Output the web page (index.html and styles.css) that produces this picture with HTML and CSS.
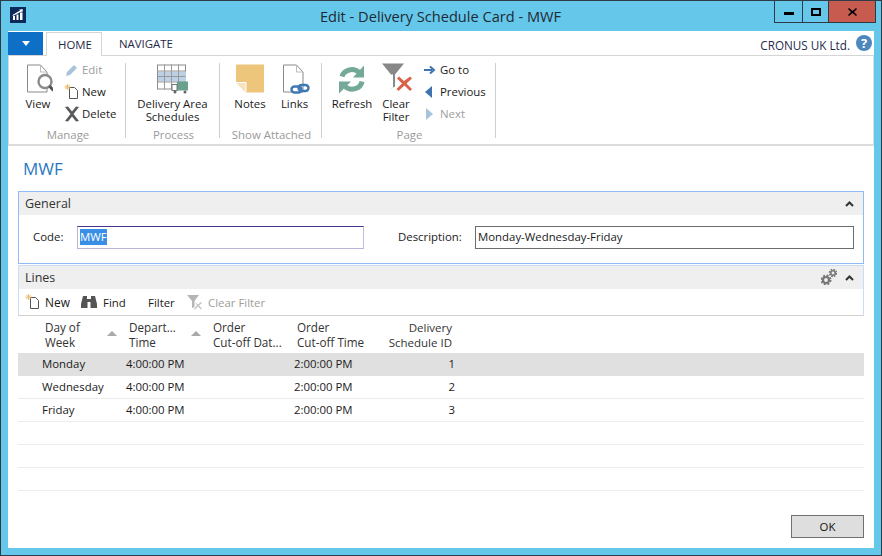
FILE: index.html
```html
<!DOCTYPE html>
<html lang="en">
<head>
<meta charset="utf-8">
<title>Edit - Delivery Schedule Card - MWF</title>
<link rel="stylesheet" href="styles.css">
</head>
<body>
<div class="window">
  <header class="titlebar">
    <svg class="app-logo" width="16" height="16" viewBox="0 0 16 16"><rect width="16" height="16" fill="#0b2a5b"/><path d="M3 9h2v4H3zM6.500 7.500h2V13h-2zM10 5.500h2.500V13H10z" fill="#fff"/><path d="M2.500 8 10 3.500l-.7-.9L13 2.300l-.8 3.200-.8-1L3 9z" fill="#fff"/></svg>
    <div class="title">Edit - Delivery Schedule Card - MWF</div>
    <div class="winbtns">
      <div class="winbtn"><span class="glyph-min"></span></div>
      <div class="winbtn"><span class="glyph-max"></span></div>
      <div class="winbtn close"><svg width="9" height="8" viewBox="0 0 9 8"><path d="M1 0l3.500 3L8 0l1 1-3 3 3 3-1 1-3.500-3L1 8 0 7l3-3-3-3z" fill="#000"/></svg></div>
    </div>
  </header>
  <div class="client">
    <div class="tabs">
      <div class="appbtn"><span class="tri"></span></div>
      <div class="tab active">HOME</div>
      <div class="tab">NAVIGATE</div>
      <div class="company">CRONUS UK Ltd.</div>
      <div class="help">?</div>
    </div>
    <div class="ribbon">
      <section class="group g-manage">
        <div class="group-body">
          <div class="big w-view">
            <svg width="30" height="30" viewBox="0 0 30 30" fill="none"><path d="M4.500 1.500h13l6.500 7v20H4.500z" fill="#fff" stroke="#8a8a8a"/><path d="M17.500 1.500v7H24" stroke="#bbb"/><circle cx="22" cy="18" r="6.500" fill="#fff" stroke="#8a8a8a" stroke-width="2.400"/><path d="M26.500 22.500 30.500 27" stroke="#555" stroke-width="3"/></svg>
            <span>View</span>
          </div>
          <div class="stack">
            <div class="small off"><svg width="16" height="16" viewBox="0 0 16 16"><path d="M2 14l1-4 7-7 3 3-7 7z" fill="#a9c3dc"/></svg><span>Edit</span></div>
            <div class="small"><svg width="16" height="16" viewBox="0 0 16 16" fill="none"><path d="M5.500 3.500h5l3 3v8h-8z" fill="#fff" stroke="#555"/><path d="M3.500 0v6M.5 3h6M1.500 1l4 4M5.500 1l-4 4" stroke="#eebd6e"/></svg><span>New</span></div>
            <div class="small"><svg width="16" height="16" viewBox="0 0 16 16"><path d="M1 1l3-.5 4 5 4-5 3 .5-5.500 7 5.500 7-3 .5-4-5-4 5-3-.5L6.500 8z" fill="#5a5a5a"/></svg><span>Delete</span></div>
          </div>
        </div>
        <div class="group-label">Manage</div>
      </section>
      <section class="group g-process">
        <div class="group-body">
          <div class="big w-delivery">
            <svg width="32" height="30" viewBox="0 0 32 30"><rect x=".5" y="1.500" width="28" height="24" fill="#fff" stroke="#8c8c8c"/><rect x="1" y="8" width="28" height="10" fill="#bdd1e6"/><path d="M.5 7.500h28M.5 13h28M.5 18.500h28M7.500 1v25M14.500 1v25M21.500 1v25" stroke="#9a9a9a"/><rect x="20" y="18" width="11" height="9" fill="#69a08e"/><rect x="15" y="21" width="5" height="6" fill="#fff" stroke="#777"/><circle cx="18" cy="28.500" r="1.500" fill="#666"/><circle cx="28" cy="28.500" r="1.500" fill="#666"/></svg>
            <span>Delivery Area<br>Schedules</span>
          </div>
        </div>
        <div class="group-label">Process</div>
      </section>
      <section class="group g-attached">
        <div class="group-body">
          <div class="big w-notes">
            <svg width="28" height="28" viewBox="0 0 28 28"><path d="M0 0h28v28H10L0 18z" fill="#edc67c"/><path d="M10 28V18H0" fill="#f7e3bd" stroke="#fff" stroke-width="1"/></svg>
            <span>Notes</span>
          </div>
          <div class="big w-links">
            <svg width="30" height="30" viewBox="0 0 30 30" fill="none"><path d="M3.500 1.500h13l6.500 7v20H3.500z" fill="#fff" stroke="#8a8a8a"/><path d="M16.500 1.500v7H23" stroke="#bbb"/><rect x="11.500" y="23" width="10" height="6" rx="3" stroke="#3f78b5" stroke-width="2.400" fill="#fff"/><rect x="18.500" y="21.500" width="10" height="6" rx="3" stroke="#3f78b5" stroke-width="2.400"/></svg>
            <span>Links</span>
          </div>
        </div>
        <div class="group-label">Show Attached</div>
      </section>
      <section class="group g-page">
        <div class="group-body">
          <div class="big w-refresh">
            <svg width="30" height="30" viewBox="0 0 30 30" fill="none"><path d="M5 12a10 9 0 0 1 17-4" stroke="#74a899" stroke-width="5"/><path d="M27 1v12H16z" fill="#74a899"/><path d="M25 17a10 9 0 0 1-17 5" stroke="#74a899" stroke-width="5"/><path d="M2 29V17h12z" fill="#74a899"/></svg>
            <span>Refresh</span>
          </div>
          <div class="big w-clear">
            <svg width="32" height="30" viewBox="0 0 32 30"><path d="M0 0h22L13 11v12l-4 2V11z" fill="#888"/><path d="M9 11v14l2-1V11z" fill="#fff"/><path d="M15 15l2-2 5 4.500L28 13l2 2-5.500 5 5.500 5.500-2 2-5.500-5.500-6 5.500-2-2 5.500-5.500z" fill="#d9634a"/></svg>
            <span>Clear<br>Filter</span>
          </div>
          <div class="stack">
            <div class="small"><svg width="14" height="16" viewBox="0 0 14 16"><path d="M1 8h8M7 4.500 11 8l-4 3.500" fill="none" stroke="#3f73ad" stroke-width="2"/></svg><span>Go to</span></div>
            <div class="small"><svg width="14" height="16" viewBox="0 0 14 16"><path d="M2 8l7-6v12z" fill="#3f73ad"/></svg><span>Previous</span></div>
            <div class="small off"><svg width="14" height="16" viewBox="0 0 14 16"><path d="M10 8L3 2v12z" fill="#a9c3dc"/></svg><span>Next</span></div>
          </div>
        </div>
        <div class="group-label">Page</div>
      </section>
    </div>
    <div class="page">
      <h1 class="page-title">MWF</h1>
      <section class="fasttab focused">
        <div class="fast-head"><span>General</span><svg class="chev" width="9" height="6" viewBox="0 0 9 6"><path d="M1 5l3.500-3.500L8 5" fill="none" stroke="#333" stroke-width="2"/></svg></div>
        <div class="fields">
          <label class="lbl-code">Code:</label>
          <div class="input code"><span class="sel">MWF</span></div>
          <label class="lbl-desc">Description:</label>
          <div class="input desc">Monday-Wednesday-Friday</div>
        </div>
      </section>
      <section class="fasttab lines">
        <div class="fast-head"><span>Lines</span>
          <svg class="gears" width="16" height="16" viewBox="0 0 16 16" fill="none" stroke="#777"><circle cx="5" cy="11" r="3" stroke-width="2.200"/><circle cx="5" cy="11" r="4.500" stroke-width="2" stroke-dasharray="2 1.530"/><circle cx="12" cy="4" r="2.200" stroke-width="1.600"/><circle cx="12" cy="4" r="3.500" stroke-width="1.600" stroke-dasharray="1.600 1.150"/></svg>
          <svg class="chev" width="9" height="6" viewBox="0 0 9 6"><path d="M1 5l3.500-3.500L8 5" fill="none" stroke="#333" stroke-width="2"/></svg>
        </div>
        <div class="toolbar">
          <div class="tool t-new"><svg width="16" height="16" viewBox="0 0 16 16" fill="none"><path d="M5.500 3.500h5l3 3v8h-8z" fill="#fff" stroke="#555"/><path d="M3.500 0v6M.5 3h6M1.500 1l4 4M5.500 1l-4 4" stroke="#eebd6e"/></svg><span>New</span></div>
          <div class="tool t-find"><svg width="16" height="14" viewBox="0 0 16 14"><path d="M2 1h4v3h4V1h4l2 8v4H9.500V7h-3v6H0V9z" fill="#555"/></svg><span>Find</span></div>
          <div class="tool t-filter"><span>Filter</span></div>
          <div class="tool t-clear off"><svg width="16" height="15" viewBox="0 0 16 15"><path d="M0 0h12L7.500 6v6L5 13V6z" fill="#b5b5b5"/><path d="M8 7l3 2.500L14 7l1 1-3 2.500 3 3-1 1-3-3-3 3-1-1 3-3z" fill="#c4c4c4"/></svg><span>Clear Filter</span></div>
        </div>
      </section>
      <div class="grid">
        <div class="grid-head">
          <div class="th sorted">Day of<br>Week<i class="sort"></i></div>
          <div class="th sorted">Depart...<br>Time<i class="sort"></i></div>
          <div class="th">Order<br>Cut-off Dat...</div>
          <div class="th">Order<br>Cut-off Time</div>
          <div class="th num">Delivery<br>Schedule ID</div>
        </div>
        <div class="grid-row current"><div>Monday</div><div>4:00:00 PM</div><div></div><div>2:00:00 PM</div><div class="num">1</div></div>
        <div class="grid-row"><div>Wednesday</div><div>4:00:00 PM</div><div></div><div>2:00:00 PM</div><div class="num">2</div></div>
        <div class="grid-row"><div>Friday</div><div>4:00:00 PM</div><div></div><div>2:00:00 PM</div><div class="num">3</div></div>
        <div class="grid-row"></div>
        <div class="grid-row"></div>
        <div class="grid-row"></div>
      </div>
      <div class="actions"><button class="ok" type="button">OK</button></div>
    </div>
  </div>
</div>
</body>
</html>
```
FILE: styles.css
```css
* { box-sizing: border-box; }
html, body { margin: 0; padding: 0; }
body { width: 882px; height: 556px; overflow: hidden; font-family: "Open Sans", "Noto Sans", sans-serif; font-size: 11.4px; color: #1a1a1a; }
.window { width: 882px; height: 556px; background: #65c8eb; border: 1px solid #2e3b46; display: flex; flex-direction: column; }
.titlebar { height: 30px; display: flex; align-items: flex-start; flex: none; }
.app-logo { margin: 6px 0 0 9px; flex: none; }
.title { flex: 1; text-align: center; font-size: 14.6px; line-height: 30px; color: #1f2a33; padding-left: 81px; }
.winbtns { display: flex; margin-right: 5px; height: 22px; border: 1px solid #2e3b46; border-top: 0; }
.winbtn { width: 28px; display: flex; align-items: center; justify-content: center; border-right: 1px solid #2e3b46; }
.winbtn:nth-child(2) { width: 26px; }
.winbtn:last-child { width: 46px; border-right: 0; }
.close { background: #c75b50; }
.glyph-min { width: 10px; height: 3px; background: #000; margin-top: 4px; }
.glyph-max { width: 10px; height: 8px; border: 2px solid #000; }
.client { flex: 1; margin: 0 7px 7px 7px; background: #fff; display: flex; flex-direction: column; min-height: 0; }
.tabs { height: 25px; display: flex; align-items: flex-start; flex: none; padding-top: 1px; border-bottom: 1px solid #d5d5d5; position: relative; }
.appbtn { width: 35px; height: 23px; background: #0e6fc7; display: flex; align-items: center; justify-content: center; }
.tri { width: 0; height: 0; border-left: 4px solid transparent; border-right: 4px solid transparent; border-top: 5px solid #fff; }
.tab { height: 24px; line-height: 23px; padding: 0 11px; color: #1f2a4a; }
.tab.active { margin-left: 3px; height: 24px; width: 56px; border: 1px solid #d5d5d5; border-bottom: 0; background: #fff; margin-bottom: -1px; }
.tab:not(.active) { margin-left: 6px; }
.company { margin-left: auto; line-height: 27px; font-size: 11.7px; color: #1f2a4a; }
.help { width: 16px; height: 16px; border-radius: 50%; background: #4d87bd; color: #fff; font-weight: 700; font-size: 13px; line-height: 16px; text-align: center; margin: 3px 2px 0 6px; }
.ribbon { height: 90px; display: flex; flex: none; border: 1px solid #dcdcdc; border-top: 0; border-bottom: 2px solid #dcdcdc; padding-top: 7px; }
.group { display: flex; flex-direction: column; border-right: 1px solid #cfcfcf; height: 75px; }
.g-manage { width: 117px; }
.g-process { width: 94px; }
.g-attached { width: 102px; }
.g-page { width: 174px; }
.group-body { display: flex; flex: 1; min-height: 0; }
.group-label { text-align: center; color: #9a9a9a; line-height: 15px; height: 11px; padding-left: 2px; }
.big { display: flex; flex-direction: column; align-items: center; line-height: 13px; text-align: center; }
.big svg { flex: none; height: 31px; margin-bottom: 3px; }
.w-view { width: 58px; }
.w-delivery { width: 94px; }
.w-notes { width: 60px; padding-top: 1px; }
.w-notes svg { height: 29px; margin-bottom: 4px; }
.w-links { width: 29px; }
.w-refresh { width: 60px; padding-top: 1px; }
.w-refresh svg { margin-bottom: 2px; }
.w-clear { width: 28px; }
.w-clear svg { margin-left: 4px; }
.stack { display: flex; flex-direction: column; gap: 6px; margin-top: -1px; }
.g-manage .stack { margin-left: -3px; }
.g-page .stack { margin-left: 13px; }
.small { display: flex; align-items: center; gap: 2px; height: 16px; line-height: 16px; }
.g-page .small { gap: 3px; }
.off { color: #9d9d9d; }
.page { flex: 1; padding: 0 10px; display: flex; flex-direction: column; min-height: 0; }
.page-title { margin: 10px 0 0; height: 35px; font-size: 17px; font-weight: 400; line-height: 25px; padding-left: 5px; color: #2a78c2; }
.fasttab { border: 1px solid #8fbcf5; flex: none; }
.fasttab.focused { height: 73px; margin-bottom: 1px; }
.fasttab.lines { height: 51px; border-color: #c8def8; border-bottom-color: #d0d0d0; }
.fast-head { height: 23px; background: #efefef; display: flex; align-items: center; padding: 0 9px 0 6px; font-size: 12.5px; line-height: 23px; color: #333; }
.chev { margin-left: 6px; flex: none; }
.fast-head span { margin-right: auto; }
.gears { margin-top: -2px; margin-right: 2px; flex: none; }
.fields { display: flex; align-items: flex-start; padding-top: 11px; }
.lbl-code { margin-left: 14px; width: 44px; line-height: 21px; }
.input { height: 23px; border: 1px solid #6c6c6c; line-height: 20px; padding-left: 2px; }
.code { width: 287px; border-color: #48358f #c0bfe0 #b9b6de #b9b6de; }
.sel { display: inline-block; background: #3a8ee6; color: #fff; line-height: 16px; }
.lbl-desc { margin-left: 34px; width: 77px; line-height: 21px; }
.desc { width: 379px; }
.toolbar { height: 26px; display: flex; align-items: center; padding-left: 6px; }
.tool { display: flex; align-items: center; gap: 6px; }
.t-new { width: 56px; gap: 4px; font-size: 11.9px; }
.t-find { width: 67px; }
.t-filter { width: 39px; }
.t-clear { gap: 5px; }
.grid { flex: none; }
.grid-head { height: 37px; display: grid; grid-template-columns: 84px 84px 84px 84px 71px; padding-left: 27px; line-height: 15px; padding-top: 4px; font-size: 11.7px; color: #333; }
.th { position: relative; white-space: nowrap; }
.th.num { font-size: 11.5px; }
.sort { position: absolute; left: 62px; top: 11px; width: 0; height: 0; border-left: 5px solid transparent; border-right: 5px solid transparent; border-bottom: 5px solid #a8a8a8; }
.num { text-align: right; }
.grid-row { height: 23px; display: grid; grid-template-columns: 84px 84px 84px 84px 77px; padding-left: 24px; line-height: 22px; border-bottom: 1px solid #ececec; }
.grid-row.current { background: #e0e0e0; border-bottom-color: #e0e0e0; }
.actions { display: flex; justify-content: flex-end; padding-top: 24px; }
.ok { width: 73px; height: 23px; background: #dedede; border: 1px solid #707070; font: inherit; color: #111; padding: 0; }
```
